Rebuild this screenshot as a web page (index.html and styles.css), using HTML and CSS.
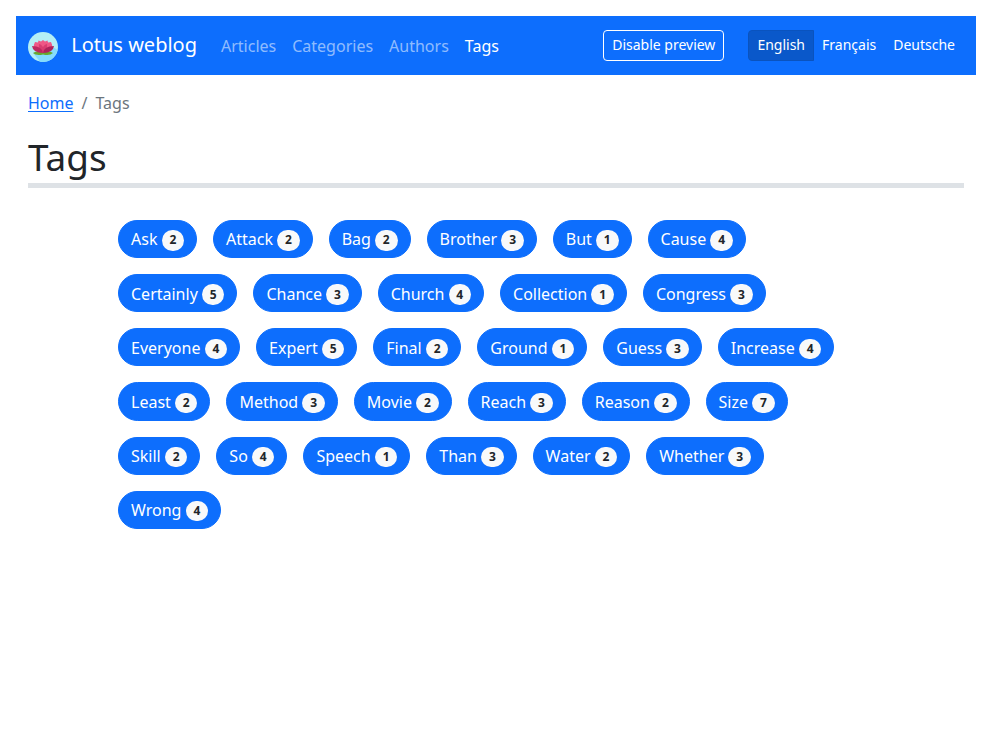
FILE: index.html
```html
<!DOCTYPE html>
<html lang="en">
<head>
<meta charset="utf-8">
<title>Tags - Lotus weblog</title>
<link rel="stylesheet" href="styles.css">
</head>
<body>
<nav class="navbar">
  <a class="brand" href="#">
    <svg class="logo" viewBox="0 0 30 30" aria-hidden="true">
      <circle cx="15" cy="15" r="15" fill="#b4eff5"/>
      <path d="M5 21L12 29.700A15 15 0 0 0 29.500 18L25 15Z" fill="#85dcfc"/>
      <path d="M5 21Q9 18 15 20Q21 18 25 21Q22 24 15 22.500Q8 24 5 21Z" fill="#67a82d"/>
      <path d="M15 21L6 17Q5 13 7 10L10 10.500L10.500 8.500L13 9.500L15 8L17 9.500L19.500 8.500L20 10.500L23 10Q25 13 24 17Z" fill="#ef5786"/>
      <path d="M15 21Q10 16 11 12Q13 12 15 15Q17 12 19 12Q20 16 15 21Z" fill="#d83c70"/>
      <path d="M15 21Q14 14 4 14Q5 21 15 21Z" fill="#bd285f"/>
      <path d="M15 21Q16 14 26 14Q25 21 15 21Z" fill="#ad225b"/>
    </svg>
    <span>Lotus weblog</span>
  </a>
  <div class="links">
    <a href="#">Articles</a><a href="#">Categories</a><a href="#">Authors</a><a class="active" href="#">Tags</a>
  </div>
  <a class="preview" href="#">Disable preview</a>
  <div class="languages">
    <a class="current" href="#">English</a><a href="#">Français</a><a href="#">Deutsche</a>
  </div>
</nav>
<main>
  <nav class="breadcrumb"><a href="#">Home</a><span>/</span><span>Tags</span></nav>
  <h1>Tags</h1>
  <div class="tags">
    <a href="#">Ask <b>2</b></a>
    <a href="#">Attack <b>2</b></a>
    <a href="#">Bag <b>2</b></a>
    <a href="#">Brother <b>3</b></a>
    <a href="#">But <b>1</b></a>
    <a href="#">Cause <b>4</b></a>
    <a href="#">Certainly <b>5</b></a>
    <a href="#">Chance <b>3</b></a>
    <a href="#">Church <b>4</b></a>
    <a href="#">Collection <b>1</b></a>
    <a href="#">Congress <b>3</b></a>
    <a href="#">Everyone <b>4</b></a>
    <a href="#">Expert <b>5</b></a>
    <a href="#">Final <b>2</b></a>
    <a href="#">Ground <b>1</b></a>
    <a href="#">Guess <b>3</b></a>
    <a href="#">Increase <b>4</b></a>
    <a href="#">Least <b>2</b></a>
    <a href="#">Method <b>3</b></a>
    <a href="#">Movie <b>2</b></a>
    <a href="#">Reach <b>3</b></a>
    <a href="#">Reason <b>2</b></a>
    <a href="#">Size <b>7</b></a>
    <a href="#">Skill <b>2</b></a>
    <a href="#">So <b>4</b></a>
    <a href="#">Speech <b>1</b></a>
    <a href="#">Than <b>3</b></a>
    <a href="#">Water <b>2</b></a>
    <a href="#">Whether <b>3</b></a>
    <a href="#">Wrong <b>4</b></a>
  </div>
</main>
</body>
</html>
```
FILE: styles.css
```css
* { box-sizing: border-box; }
body { margin: 16px; font: 16px/1.5 "Noto Sans", sans-serif; color: #212529; background: #fff; }
a { text-decoration: none; }
.navbar { display: flex; align-items: center; height: 59px; padding: 0 12px; background: #0d6efd; }
.brand { display: flex; align-items: center; gap: 13.200px; margin-right: 16px; font-size: 20px; line-height: 30px; color: #fff; }
.brand span { padding-bottom: 2px; }
.logo { width: 30px; height: 30px; position: relative; top: 1px; }
.links { display: flex; margin-right: auto; }
.links a { padding: 8px; color: rgba(255, 255, 255, .55); }
.links a.active { color: #fff; }
.preview, .languages a { padding: 3px 8px 5px; border: 1px solid transparent; font-size: 14px; line-height: 21px; color: #fff; }
.preview { margin-right: 24px; border-color: #fff; border-radius: 4px; }
.languages { display: flex; }
.languages a { margin-left: -1px; }
.languages a.current { margin-left: 0; background: #0a58ca; border-color: #0a53be; border-radius: 4px 0 0 4px; }
main { padding: 16px 12px; }
.breadcrumb { display: flex; gap: 8px; margin-bottom: 16px; color: #6c757d; }
.breadcrumb a { color: #0d6efd; text-decoration: underline; text-underline-offset: 2px; }
h1 { margin: 0 0 31.600px; padding: 4px 0; border-bottom: 5px solid #dee2e6; font-size: calc(22px + 1.5vw); font-weight: 400; line-height: 1.2; }
.tags { display: flex; flex-wrap: wrap; gap: 16px; width: 756px; margin: 0 auto; }
.tags a { padding: 6.500px 12px 5.500px; border: 1px solid #0d6efd; border-radius: 20px; background: #0d6efd; color: #fff; white-space: nowrap; }
.tags b { display: inline-block; padding: 4.200px 7.800px; border-radius: 12px; background: #f8f9fa; color: #212529; font-size: 12px; line-height: 1; position: relative; top: -1px; }
```
